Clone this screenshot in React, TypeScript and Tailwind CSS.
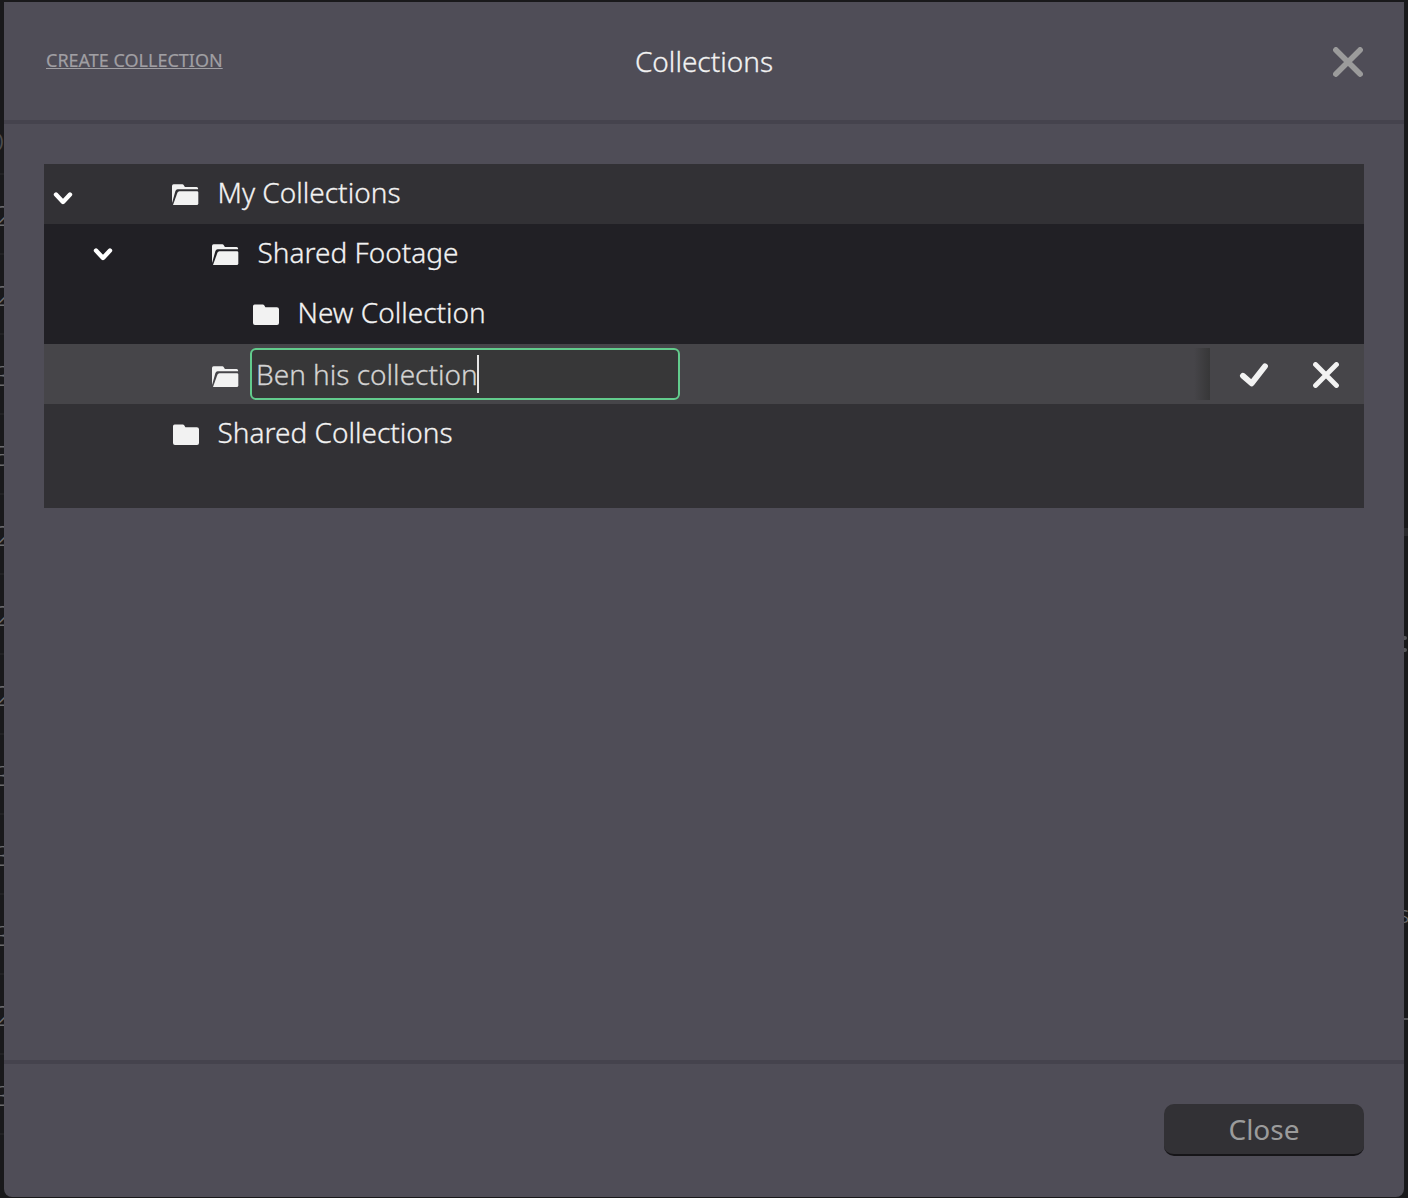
import React from "react";

const leftRows = ["2", "2", "3", "5", "2", "2", "2", "3", "3", "3", "2", "3"];

function Chevron() {
  return (
    <svg width="20" height="14" viewBox="0 0 20 14" fill="none" className="shrink-0">
      <path d="M3 3.6 L10 11 L17 3.6" stroke="#fff" strokeWidth="4.4" strokeLinecap="round" strokeLinejoin="round" />
    </svg>
  );
}

function FolderOpen() {
  return (
    <svg width="28" height="22" viewBox="0 0 28 22" fill="#f2f2f2" className="shrink-0">
      <path d="M0 18.5 V2 Q0 0.3 1.6 0.3 H10.4 Q11.3 0.3 11.8 1.2 L12.9 3 H24.6 Q26.1 3 26.1 4.5 V5.3 H5.6 Q4 5.3 3.4 7 L0.2 18.5 Z" />
      <path d="M1 21 L5.4 8.8 Q6 7.2 7.4 7.2 H25 Q26.3 7.2 26.3 8.6 V19.4 Q26.3 21 24.7 21 Z" />
    </svg>
  );
}

function Folder() {
  return (
    <svg width="28" height="22" viewBox="0 0 28 22" fill="#f2f2f2" className="shrink-0">
      <path d="M2.6 0.4 H10.8 Q11.7 0.4 12.2 1.2 L13.4 3.2 H24.8 Q27 3.2 27 5.2 V19 Q27 21 25 21 H3 Q1 21 1 19 V2.2 Q1 0.4 2.6 0.4 Z" />
    </svg>
  );
}

function Cross({ size, color, stroke }: { size: number; color: string; stroke: number }) {
  const e = stroke / 2 + 0.1;
  return (
    <svg width={size} height={size} fill="none" stroke={color} strokeWidth={stroke} strokeLinecap="round">
      <path d={`M${e} ${e} L${size - e} ${size - e} M${size - e} ${e} L${e} ${size - e}`} />
    </svg>
  );
}

function Backdrop() {
  return (
    <div className="flex h-full justify-between text-[28px] font-light leading-none text-[#6c6c6f]">
      <div className="flex w-5 flex-col bg-[#19191b]">
        <div className="h-[175px] shrink-0 border-b-2 border-[#212123] pt-[127px] text-[#4c4c4e]">
          <span className="-ml-[17px]">O</span>
        </div>
        {leftRows.map((n, i) => (
          <div key={i} className="flex h-20 shrink-0 items-center border-b-2 border-[#212123] pt-0.5">
            <span className="-ml-[5px]">{n}</span>
          </div>
        ))}
      </div>
      <div className="flex w-1 flex-col bg-[#19191b] pt-[88px]">
        <div className="mt-[440px] h-2 bg-[#29292b]" />
        <div className="mt-[100px] h-1 w-[3px] rounded-r-full bg-[#555557]" />
        <div className="mt-2 h-1 w-[3px] rounded-r-full bg-[#555557]" />
        <div className="mt-[252px] -ml-1.5 text-[24px] leading-5">s</div>
        <div className="mt-[94px] h-0.5 bg-[#555557]" />
      </div>
    </div>
  );
}

export default function App() {
  return (
    <div className="relative h-[1198px] w-[1408px] overflow-hidden bg-[#19191b] font-['Noto_Sans',sans-serif]">
      <Backdrop />

      <div className="absolute inset-x-1 top-0.5 bottom-px flex flex-col rounded-b-lg bg-[#4f4d57]">
        <header className="grid h-[122px] shrink-0 grid-cols-3 items-center border-b-4 border-[#45434d] pl-[42px] pr-[41px]">
          <button className="mb-0.5 justify-self-start text-[18px] leading-6 text-[#a09fa3] underline decoration-1 underline-offset-1 [-webkit-text-stroke:0.2px]">
            CREATE COLLECTION
          </button>
          <h2 className="mr-px justify-self-center text-[28px] font-light leading-9 text-[#f2f2f2] [-webkit-text-stroke:0.3px]">Collections</h2>
          <button className="mt-0.5 justify-self-end">
            <Cross size={30} color="#9b9b9b" stroke={5.6} />
          </button>
        </header>

        <main className="flex-1 p-10">
          <div className="h-[344px] bg-[#323135] text-[28px] font-light leading-10 text-[#f2f2f2] [-webkit-text-stroke:0.3px]">
            <div className="flex h-[60px] items-start pl-[9px]">
              <div className="flex w-[119px] pt-[27px]"><Chevron /></div>
              <div className="pt-5"><FolderOpen /></div>
              <span className="ml-[17.5px] pt-2">My Collections</span>
            </div>
            <div className="flex h-[60px] items-start bg-[#212025] pl-[49px]">
              <div className="flex w-[119px] pt-[23px]"><Chevron /></div>
              <div className="pt-5"><FolderOpen /></div>
              <span className="ml-[17.5px] pt-2">Shared Footage</span>
            </div>
            <div className="flex h-[60px] items-start bg-[#212025] pl-[208px]">
              <div className="pt-5"><Folder /></div>
              <span className="ml-[17.5px] pt-2">New Collection</span>
            </div>
            <div className="flex h-[60px] items-start bg-[#464549] pl-[168px]">
              <div className="pt-[22px]"><FolderOpen /></div>
              <div className="ml-2.5 mt-1 flex h-[52px] w-[430px] items-center rounded-md border-2 border-[#62cb8c] bg-[#373738] pl-1 text-[#d3d3d3]">
                <span>Ben his collection</span>
                <span className="-ml-px h-[38px] w-0.5 bg-[#e6e6e6]" />
              </div>
              <div className="ml-auto mt-1 flex h-[52px]">
                <div className="w-4 bg-linear-to-r from-[#464549] to-[#373738]" />
                <div className="flex items-center pl-2 pt-0.5">
                  <button className="flex w-[72px] justify-center">
                    <svg width="30" height="26" viewBox="0 0 30 26" fill="none" className="stroke-[#f2f2f2]">
                      <path d="M3.9 13.8 L12.6 21.4 L26 4.2" strokeWidth="5.8" strokeLinecap="round" strokeLinejoin="round" />
                    </svg>
                  </button>
                  <button className="flex w-[72px] justify-center">
                    <Cross size={26} color="#f2f2f2" stroke={4.9} />
                  </button>
                </div>
                <div className="w-0.5" />
              </div>
            </div>
            <div className="flex h-[60px] items-start pl-32">
              <div className="pt-5"><Folder /></div>
              <span className="ml-[17.5px] pt-2">Shared Collections</span>
            </div>
          </div>
        </main>

        <footer className="flex h-[137px] shrink-0 justify-end border-t-4 border-[#45434d] px-10 pt-10">
          <button className="h-[52px] w-[200px] rounded-[10px] border-b-2 border-[#161518] bg-[#323135] text-[28px] text-[#9b9b9b]">
            Close
          </button>
        </footer>
      </div>
    </div>
  );
}
